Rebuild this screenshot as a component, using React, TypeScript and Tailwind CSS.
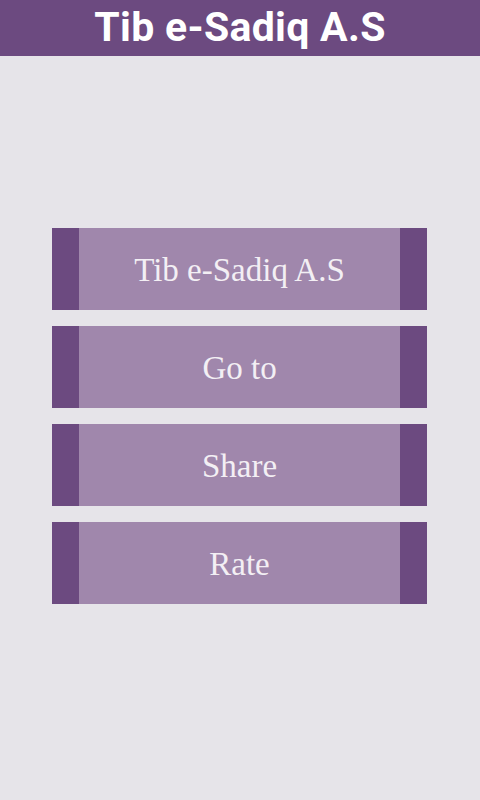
export default function App() {
  const items = ['Tib e-Sadiq A.S', 'Go to', 'Share', 'Rate'];
  return (
    <div className="min-h-[800px] bg-[#e6e4e9]">
      <header className="h-[56px] bg-[#6c4a80] flex items-center justify-center">
        <h1 className="text-white text-[41px] font-bold leading-none font-['Roboto',sans-serif] tracking-[0.3px] pb-[2px]">
          Tib e-Sadiq A.S
        </h1>
      </header>
      <div className="flex flex-col gap-4 pt-[172px] px-[52px] w-[479px]">
        {items.map((label) => (
          <button
            key={label}
            className="flex h-[82px] w-full bg-[#a087ac]"
          >
            <span className="w-[27px] h-full bg-[#6c4a80]" />
            <span className="flex-1 flex items-center justify-center text-[#f3eff4] text-[33px] font-['Liberation_Serif',serif] pt-[3px]">
              {label}
            </span>
            <span className="w-[27px] h-full bg-[#6c4a80]" />
          </button>
        ))}
      </div>
    </div>
  );
}
